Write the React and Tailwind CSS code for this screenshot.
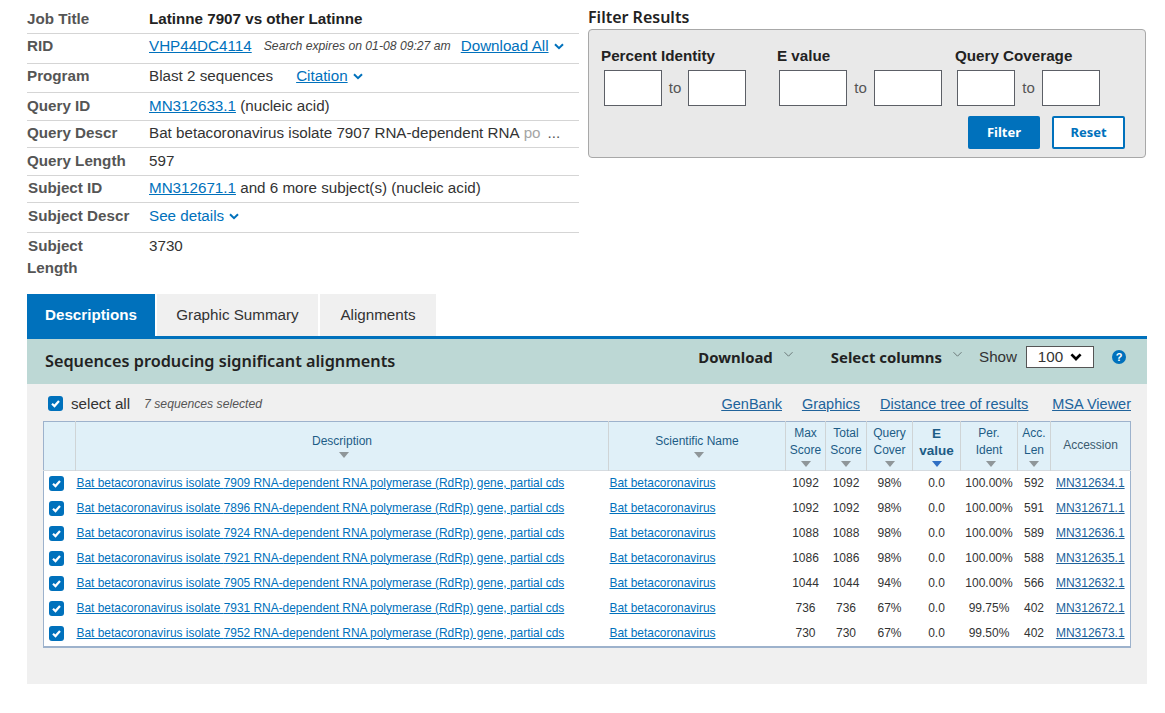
import React from 'react';

const sans = "font-['Liberation_Sans',Arial,sans-serif]";
const noto = "font-['Noto_Sans',sans-serif]";

const hits = [
  ['7909', '1092', '1092', '98%', '0.0', '100.00%', '592', 'MN312634.1'],
  ['7896', '1092', '1092', '98%', '0.0', '100.00%', '591', 'MN312671.1'],
  ['7924', '1088', '1088', '98%', '0.0', '100.00%', '589', 'MN312636.1'],
  ['7921', '1086', '1086', '98%', '0.0', '100.00%', '588', 'MN312635.1'],
  ['7905', '1044', '1044', '94%', '0.0', '100.00%', '566', 'MN312632.1'],
  ['7931', '736', '736', '67%', '0.0', '99.75%', '402', 'MN312672.1'],
  ['7952', '730', '730', '67%', '0.0', '99.50%', '402', 'MN312673.1'],
];

function Chevron({ className = 'w-[10px] h-[7px] text-[#0071bc]', width = 2 }) {
  return (
    <svg viewBox="0 0 10 7" className={`inline-block ${className}`} fill="none" stroke="currentColor" strokeWidth={width}>
      <path d="M1 1.2 5 5.2 9 1.2" />
    </svg>
  );
}

function Check({ className = '' }) {
  return (
    <span className={`flex h-[15px] w-[15px] items-center justify-center rounded-[3px] bg-[#0071bc] ${className}`}>
      <svg viewBox="0 0 12 12" className="h-[11px] w-[11px]" fill="none" stroke="white" strokeWidth="2.4">
        <path d="M2.2 6.2 4.9 8.8 9.8 3.2" />
      </svg>
    </span>
  );
}

function Sort({ active, className = 'mx-auto' }) {
  return (
    <span
      className={`mt-[2px] block h-0 w-0 border-x-[5px] border-t-[6px] border-x-transparent ${className} ${active ? 'border-t-[#2f6fc4]' : 'border-t-[#8f9699]'}`}
    />
  );
}

function InfoRow({ label, className, labelClass = '', children, last }) {
  return (
    <div className={`flex ${last ? '' : 'border-b border-[#d5d5d5]'} ${className}`}>
      <div className={`w-[122px] shrink-0 text-[15.2px] font-bold leading-[22px] text-[#555] ${labelClass}`}>{label}</div>
      <div className="min-w-0 flex-1 text-[15.2px] leading-[22px] text-[#333]">{children}</div>
    </div>
  );
}

function Range({ label, w, toW, inset, className }) {
  return (
    <div className={className}>
      <div className="h-[25px] text-[15.2px] font-bold leading-[22px] text-[#222]">{label}</div>
      <div className={`flex items-center ${inset}`}>
        <input className={`h-[36px] border border-[#5c5f66] bg-white ${w}`} />
        <span className={`text-center text-[15px] text-[#555] ${toW}`}>to</span>
        <input className={`h-[36px] border border-[#5c5f66] bg-white ${w}`} />
      </div>
    </div>
  );
}

function Th({ children, sort, active, sortClass, className = '' }) {
  return (
    <th className={`border-l border-[#cfd4d6] px-0 text-center align-middle text-[12px] font-normal leading-[17px] text-[#1d5c86] ${className}`}>
      {children}
      {sort && <Sort active={active} className={sortClass} />}
    </th>
  );
}

export default function App() {
  return (
    <div className={`${sans} h-[713px] w-[1165px] overflow-hidden bg-white pl-[27px] pt-[5px]`}>
      <div className="flex h-[289px]">
        <div className="w-[552px] shrink-0">
          <InfoRow label="Job Title" className="h-[29px] items-center">
            <span className="font-bold text-[#222]">Latinne 7907 vs other Latinne</span>
          </InfoRow>
          <InfoRow label="RID" className="h-[30px] items-start pt-[1px]">
            <div className="flex items-center whitespace-nowrap">
              <a className="text-[#0071bc] underline" href="#">VHP44DC4114</a>
              <span className="ml-[12px] text-[12.2px] italic text-[#444]">Search expires on 01-08 09:27 am</span>
              <a className="ml-[10px] text-[#0071bc] underline" href="#">Download All</a>
              <Chevron className="ml-[5px] h-[7px] w-[10px] text-[#0071bc]" />
            </div>
          </InfoRow>
          <InfoRow label="Program" className="h-[29px] items-start pt-[1px]">
            <div className="flex items-center">
              Blast 2 sequences
              <a className="ml-[23px] text-[#0071bc] underline" href="#">Citation</a>
              <Chevron className="ml-[5px] h-[7px] w-[10px] text-[#0071bc]" />
            </div>
          </InfoRow>
          <InfoRow label="Query ID" className="h-[28px] items-center pb-[2px]">
            <a className="text-[#0071bc] underline" href="#">MN312633.1</a> (nucleic acid)
          </InfoRow>
          <InfoRow label="Query Descr" className="h-[27px] items-center pb-[2px]">
            <div className="flex whitespace-nowrap">
              Bat betacoronavirus isolate 7907 RNA-dependent RNA <span className="ml-1 text-[#a5a5a5]">po</span>
              <span className="ml-[7px] text-[#555]">...</span>
            </div>
          </InfoRow>
          <InfoRow label="Query Length" className="h-[28px] items-center pb-[2px]">597</InfoRow>
          <InfoRow label="Subject ID" labelClass="pl-[1px]" className="h-[27px] items-center pb-[2px]">
            <a className="text-[#0071bc] underline" href="#">MN312671.1</a> and 6 more subject(s) (nucleic acid)
          </InfoRow>
          <InfoRow label="Subject Descr" labelClass="pl-[1px]" className="h-[30px] items-center pb-[3px]">
            <span className="text-[#0071bc]">See details</span>
            <Chevron className="ml-[5px] mb-[1px] h-[7px] w-[10px] text-[#0071bc]" />
          </InfoRow>
          <InfoRow label={<><span className="pl-[1px]">Subject</span><br />Length</>} last className="pt-[2px]">3730</InfoRow>
        </div>

        <div className="ml-[9px] w-[558px] shrink-0">
          <h2 className={`${noto} h-[24px] text-[16px] font-semibold leading-[24px] text-[#222]`}>Filter Results</h2>
          <div className="h-[129px] rounded-[4px] border border-[#a8a8a8] bg-[#e9e9e9] pl-[12px] pt-[15px]">
            <div className="flex">
              <Range label="Percent Identity" w="w-[58px]" toW="w-[26px]" inset="pl-[3px]" className="w-[176px]" />
              <Range label="E value" w="w-[68px]" toW="w-[27px]" inset="pl-[2px]" className="w-[178px]" />
              <Range label="Query Coverage" w="w-[58px]" toW="w-[27px]" inset="pl-[2px]" />
            </div>
            <div className={`${noto} mt-[10px] flex justify-end gap-[12px] pr-[20px] text-[13px] font-bold`}>
              <button className="h-[33px] w-[72px] rounded-[2px] bg-[#0071bc] text-white">Filter</button>
              <button className="h-[33px] w-[73px] rounded-[2px] border-2 border-[#0071bc] bg-white text-[#0071bc]">Reset</button>
            </div>
          </div>
        </div>
      </div>

      <div className="flex h-[42px] w-[1120px] text-[15.2px]">
        <div className="flex w-[128px] items-center justify-center bg-[#0071bc] pt-[1px] font-bold text-white">Descriptions</div>
        <div className="ml-[2px] flex w-[161px] items-center justify-center bg-[#f0f0f0] pt-[1px] text-[#333]">Graphic Summary</div>
        <div className="ml-[2px] flex w-[116px] items-center justify-center bg-[#f0f0f0] pt-[1px] text-[#333]">Alignments</div>
      </div>

      <div className="w-[1120px] border-t-[3px] border-[#0071bc]">
        <div className="flex h-[45px] items-center bg-[#bdd8d5] pl-[18px]">
          <h2 className={`${noto} pb-[1px] text-[16.25px] font-semibold text-[#222]`}>Sequences producing significant alignments</h2>
          <div className="ml-auto flex items-center pb-[9px] text-[15.2px] text-[#333]">
            <span className={`${noto} text-[14.9px] font-bold text-[#222]`}>Download</span>
            <Chevron width={1} className="ml-[10px] mb-[5px] h-[7px] w-[11px] text-[#6c7a7a]" />
            <span className={`${noto} ml-[37px] text-[14.9px] font-bold text-[#222]`}>Select columns</span>
            <Chevron width={1} className="ml-[10px] mb-[5px] h-[7px] w-[11px] text-[#6c7a7a]" />
            <span className="ml-[16px] pt-[1px]">Show</span>
            <span className="ml-[9px] flex h-[22px] w-[68px] items-center justify-center gap-[7px] border border-[#555] bg-white text-[#333]">
              100
              <Chevron width={2.4} className="h-[8px] w-[12px] text-black" />
            </span>
            <span className="ml-[18px] mr-[21px] flex h-[14px] w-[14px] items-center justify-center rounded-full bg-[#0071bc] text-[11px] font-bold text-white">?</span>
          </div>
        </div>

        <div className="h-[300px] bg-[#f0f0f0] pl-[16px] pr-[16px]">
          <div className="flex h-[37px] items-center pl-[5px] pt-[3px] text-[14.5px] text-[#333]">
            <Check className="mb-[2px]" />
            <span className="ml-[8px] text-[15.2px]">select all</span>
            <span className="ml-[14px] text-[12.2px] italic text-[#555]">7 sequences selected</span>
            <div className="ml-auto flex gap-[20px] pt-[1px] text-[#20639b] underline">
              <a href="#">GenBank</a>
              <a href="#">Graphics</a>
              <a className="mr-[4px]" href="#">Distance tree of results</a>
              <a href="#">MSA Viewer</a>
            </div>
          </div>

          <table className="w-[1088px] table-fixed border-collapse border border-b-2 border-[#9db2cc] bg-white text-[12px] text-[#333]">
            <colgroup>
              <col className="w-[32px]" />
              <col className="w-[533px]" />
              <col className="w-[177px]" />
              <col className="w-[40px]" />
              <col className="w-[41px]" />
              <col className="w-[46px]" />
              <col className="w-[48px]" />
              <col className="w-[57px]" />
              <col className="w-[33px]" />
              <col />
            </colgroup>
            <thead>
              <tr className="h-[49px] border-b border-[#d5dbe0] bg-[#e0f0f8]">
                <th />
                <Th sort sortClass="ml-[263px]" className="pb-[1px]">Description</Th>
                <Th sort sortClass="ml-[85px]" className="pb-[1px]">Scientific Name</Th>
                <Th sort>Max<br />Score</Th>
                <Th sort>Total<br />Score</Th>
                <Th sort>Query<br />Cover</Th>
                <Th sort active className="text-[13.5px] !font-bold text-[#0b4f80]">E<br />value</Th>
                <Th sort sortClass="ml-[25px]">Per.<br />Ident</Th>
                <Th sort>Acc.<br />Len</Th>
                <Th className="pb-[1px] text-[#3c5a6e]">Accession</Th>
              </tr>
            </thead>
            <tbody>
              {hits.map((h) => (
                <tr key={h[0]} className="h-[25px] text-center last:h-[26px]">
                  <td className="pl-[5px]"><Check /></td>
                  <td className="truncate pl-[1px] text-left">
                    <a className="text-[11.93px] text-[#0071bc] underline" href="#">
                      Bat betacoronavirus isolate {h[0]} RNA-dependent RNA polymerase (RdRp) gene, partial cds
                    </a>
                  </td>
                  <td className="pl-[1px] text-left">
                    <a className="text-[11.93px] text-[#0071bc] underline" href="#">Bat betacoronavirus</a>
                  </td>
                  <td>{h[1]}</td>
                  <td>{h[2]}</td>
                  <td>{h[3]}</td>
                  <td>{h[4]}</td>
                  <td>{h[5]}</td>
                  <td>{h[6]}</td>
                  <td><a className="text-[#20639b] underline" href="#">{h[7]}</a></td>
                </tr>
              ))}
            </tbody>
          </table>
        </div>
      </div>
    </div>
  );
}
